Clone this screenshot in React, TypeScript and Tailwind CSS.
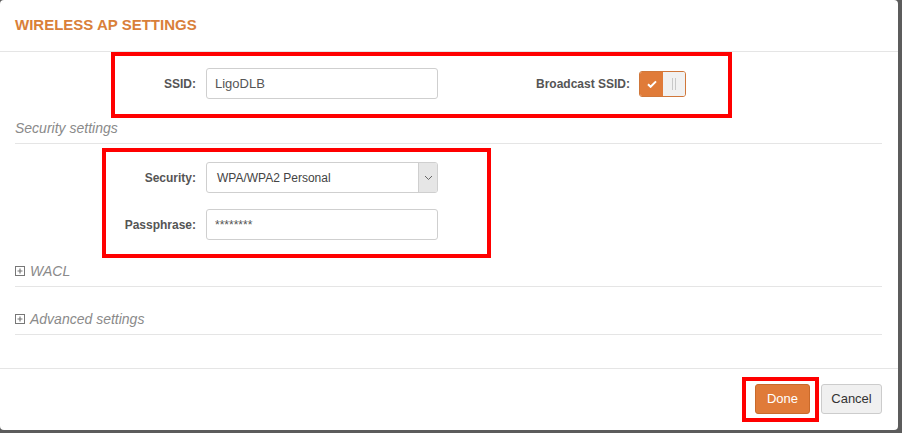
import React from "react"

const PlusBox = () => (
    <svg width="10" height="10" viewBox="0 0 10 10" className="mr-[5px] shrink-0">
        <rect x="0.5" y="0.5" width="9" height="9" fill="none" stroke="#777" />
        <path d="M2.5 5h5M5 2.5v5" stroke="#777" strokeWidth="1.2" />
    </svg>
)

const Label = ({ children, className = "" }: { children: React.ReactNode; className?: string }) => (
    <label className={`text-right text-[12px] font-bold text-[#555] ${className}`}>{children}</label>
)

const Legend = ({ children, icon = false, className = "" }: { children: React.ReactNode; icon?: boolean; className?: string }) => (
    <div className={`mx-[15px] mr-[16px] flex items-center border-b border-[#e5e5e5] pb-[5px] ${className}`}>
        {icon && <PlusBox />}
        <span className="h-[20px] text-[14px] italic leading-[20px] text-[#8a8a8a]">{children}</span>
    </div>
)

const Toggle = () => (
    <div className="flex h-[26px] w-[47px] overflow-hidden rounded-[3px] border border-[#d0773a]">
        <div className="flex w-[23px] items-center justify-center bg-[#e07b39]">
            <svg width="10" height="8" viewBox="0 0 10 8">
                <path d="M1 4.2l2.6 2.6L9 1.4" fill="none" stroke="#fff" strokeWidth="2" />
            </svg>
        </div>
        <div className="flex flex-1 items-center justify-center gap-[2px] bg-[#f1f1f1]">
            <div className="h-[12px] w-px bg-[#c8c8c8]" />
            <div className="h-[12px] w-px bg-[#c8c8c8]" />
        </div>
    </div>
)

export default function App() {
    return (
        <div className="h-[433px] w-[902px] bg-[#5c5c5c] font-['Liberation_Sans',Arial,sans-serif]">
            <div className="relative h-[430px] w-[898px] overflow-hidden rounded-[4px] bg-white">
                {/* header */}
                <div className="flex h-[52px] items-center border-b border-[#e5e5e5] px-[15px]">
                    <h3 className="text-[15px] font-bold uppercase text-[#d9803a]">Wireless AP Settings</h3>
                </div>

                {/* body */}
                <div className="flex h-[317px] flex-col border-b border-[#e5e5e5]">
                    <div className="mt-[16px] flex h-[31px] items-center pl-[15px]">
                        <Label className="w-[181px]">SSID:</Label>
                        <input
                            readOnly
                            value="LigoDLB"
                            className="ml-[10px] h-[31px] w-[232px] rounded-[3px] border border-[#cfcfcf] px-[8px] text-[13px] text-[#555] outline-none"
                        />
                        <Label className="w-[192px]">Broadcast SSID:</Label>
                        <div className="ml-[9px]">
                            <Toggle />
                        </div>
                    </div>

                    <Legend className="mt-[19px]">Security settings</Legend>

                    <div className="mt-[18px] flex h-[31px] items-center pl-[15px]">
                        <Label className="w-[181px]">Security:</Label>
                        <div className="ml-[10px] flex h-[31px] w-[232px] overflow-hidden rounded-[3px] border border-[#cfcfcf]">
                            <div className="flex flex-1 items-center px-[10px] text-[12px] text-[#444]">WPA/WPA2 Personal</div>
                            <div className="flex w-[19px] items-center justify-center border-l border-[#cfcfcf] bg-[#e6e6e6]">
                                <svg width="9" height="6" viewBox="0 0 9 6">
                                    <path d="M1 1l3.5 3.5L8 1" fill="none" stroke="#666" strokeWidth="1" />
                                </svg>
                            </div>
                        </div>
                    </div>

                    <div className="mt-[16px] flex h-[31px] items-center pl-[15px]">
                        <Label className="w-[181px]">Passphrase:</Label>
                        <input
                            readOnly
                            value="********"
                            className="ml-[10px] h-[31px] w-[232px] rounded-[3px] border border-[#cfcfcf] px-[8px] text-[12px] text-[#555] outline-none"
                        />
                    </div>

                    <Legend icon className="mt-[21px]">WACL</Legend>
                    <Legend icon className="mt-[22px]">Advanced settings</Legend>
                </div>

                {/* footer */}
                <div className="flex justify-end gap-[11px] pr-[16px] pt-[15px]">
                    <button className="h-[30px] w-[55px] rounded-[3px] border border-[#c96a2b] bg-[#e07b39] text-[13px] text-white">
                        Done
                    </button>
                    <button className="h-[30px] w-[61px] rounded-[3px] border border-[#cccccc] bg-[#f0f0f0] text-[13px] text-[#333]">
                        Cancel
                    </button>
                </div>

                {/* annotation boxes */}
                <div className="pointer-events-none absolute left-[111px] top-[52px] h-[66px] w-[621px] border-4 border-[#ff0000]" />
                <div className="pointer-events-none absolute left-[102px] top-[148px] h-[110px] w-[389px] border-4 border-[#ff0000]" />
                <div className="pointer-events-none absolute left-[742px] top-[377px] h-[45px] w-[77px] border-4 border-[#ff0000]" />
            </div>
        </div>
    )
}
